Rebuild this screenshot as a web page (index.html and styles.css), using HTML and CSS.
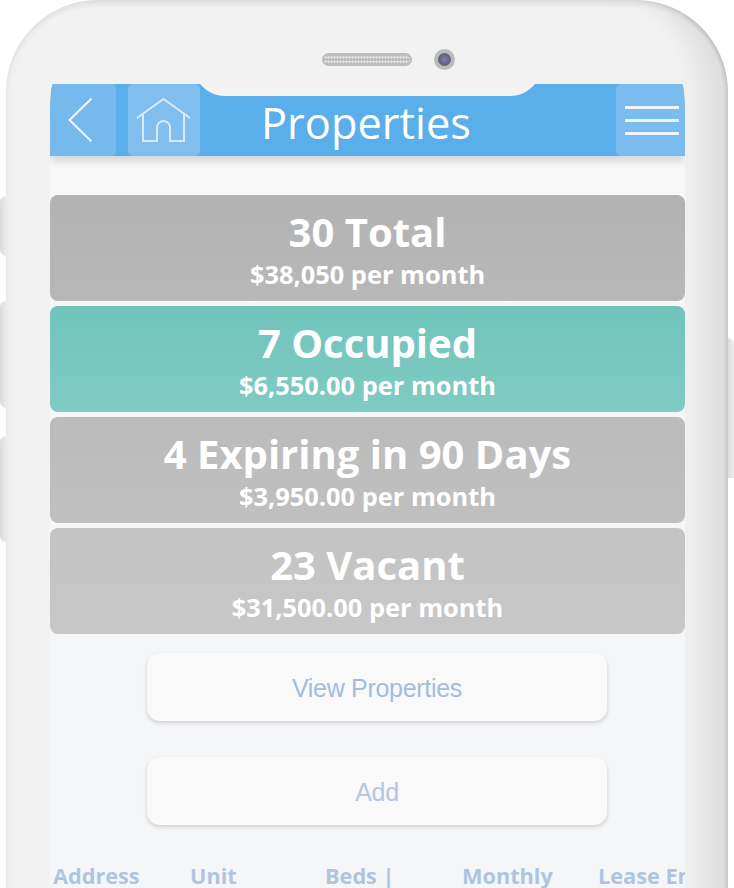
FILE: index.html
```html
<!DOCTYPE html>
<html lang="en">
<head>
    <meta charset="UTF-8">
    <meta name="viewport" content="width=device-width, initial-scale=1.0">
    <title>Properties</title>
    <link rel="stylesheet" href="styles.css">
</head>
<body>
    <div class="side_btn left_one"></div>
    <div class="side_btn left_two"></div>
    <div class="side_btn left_three"></div>
    <div class="side_btn right_one"></div>

    <div class="phone">
        <!-- speaker and camera sit on the phone body -->
        <div class="speaker"></div>
        <div class="camera"></div>

        <div class="screen">
            <div class="header">
                <div class="header_left">
                    <div class="nav_btn back_btn">
                        <svg width="26" height="46" viewBox="0 0 26 46">
                            <path d="M24.5 1.5 L2.5 23 L24.5 44.5" fill="none" stroke="#f1f7fd" stroke-width="2"/>
                        </svg>
                    </div>
                    <div class="nav_btn home_btn">
                        <svg width="56" height="46" viewBox="0 0 56 46">
                            <path d="M1 21 L27.5 2 L54 21" fill="none" stroke="#d9ebfa" stroke-width="2"/>
                            <path d="M7 16.7 V44 H21 V30.5 A6.5 6.5 0 0 1 34 30.5 V44 H48 V16.7" fill="none" stroke="#d9ebfa" stroke-width="2"/>
                        </svg>
                    </div>
                </div>
                <div class="title">Properties</div>
                <div class="header_right">
                    <div class="nav_btn menu_btn">
                        <span class="menu_line"></span>
                        <span class="menu_line"></span>
                        <span class="menu_line"></span>
                    </div>
                </div>
                <svg class="notch" width="335" height="13" viewBox="0 0 335 13">
                    <path d="M0 0 H335 C328 8 320 12 310 12 H25 C15 12 7 8 0 0 Z" fill="#f3f3f3"/>
                </svg>
            </div>

            <div class="cards">
                <div class="card card_total">
                    <div class="card_title">30 Total</div>
                    <div class="card_sub">$38,050 per month</div>
                </div>
                <div class="card card_occupied">
                    <div class="card_title">7 Occupied</div>
                    <div class="card_sub">$6,550.00 per month</div>
                </div>
                <div class="card card_expiring">
                    <div class="card_title">4 Expiring in 90 Days</div>
                    <div class="card_sub">$3,950.00 per month</div>
                </div>
                <div class="card card_vacant">
                    <div class="card_title">23 Vacant</div>
                    <div class="card_sub">$31,500.00 per month</div>
                </div>
            </div>

            <div class="actions">
                <div class="action_btn">View Properties</div>
                <div class="action_btn add_btn">Add</div>
            </div>

            <div class="table_head">
                <div class="col_address">Address</div>
                <div class="col_unit">Unit</div>
                <div class="col_beds">Beds |</div>
                <div class="col_rent">Monthly</div>
                <div class="col_lease">Lease End</div>
            </div>
        </div>
    </div>
</body>
</html>
```

FILE: styles.css
```css
html, body{
    margin: 0;
    height: 888px;
    overflow: hidden;
    background-color: #fff;
}
body{
    position: relative;
    font-family: "Open Sans", "Noto Sans", sans-serif;
}
.phone{
    position: relative;
    box-sizing: border-box;
    width: 722px;
    height: 1000px;
    margin-left: 6px;
    padding: 84px 43px 0 44px;
    border-radius: 92px;
    background-color: #f2f2f2;
    box-shadow:
        inset -3px 0 3px rgba(0, 0, 0, 0.08),
        inset -44px 0 30px -20px rgba(0, 0, 0, 0.09),
        inset 10px 0 8px -8px rgba(0, 0, 0, 0.04),
        inset 0 6px 4px -1px rgba(0, 0, 0, 0.06);
}
.side_btn{
    position: absolute;
    width: 8px;
    background: linear-gradient(90deg, #dcdcdc, #efefef);
}
.left_one{
    left: 0;
    top: 196px;
    height: 60px;
    border-radius: 6px 0 0 6px;
}
.left_two{
    left: 0;
    top: 301px;
    height: 107px;
    border-radius: 6px 0 0 6px;
}
.left_three{
    left: 0;
    top: 436px;
    height: 106px;
    border-radius: 6px 0 0 6px;
}
.right_one{
    right: 0;
    top: 338px;
    height: 140px;
    width: 6px;
    border-radius: 0 6px 0 0;
    background: linear-gradient(90deg, #dcdcdc, #ececec);
}
.speaker{
    position: absolute;
    left: 316px;
    top: 53px;
    width: 90px;
    height: 13px;
    box-sizing: border-box;
    border: 2px solid #bdbdbd;
    border-radius: 7px;
    background-color: #bdbdbd;
    background-image: radial-gradient(circle, #e6e6e6 0, #e6e6e6 1px, transparent 1.3px);
    background-size: 3px 4.5px;
}
.camera{
    position: absolute;
    left: 428px;
    top: 49px;
    width: 21px;
    height: 21px;
    box-sizing: border-box;
    border: 4px solid #bcbcbc;
    border-radius: 50%;
    background: radial-gradient(circle, #7d7fb0 0, #66667f 50%, #55555f 100%);
}
.screen{
    height: 100%;
    overflow: hidden;
    background: linear-gradient(180deg, #f8f8f9 80px, #f5f6f8 300px);
}
.header{
    position: relative;
    display: grid;
    grid-template-columns: 1fr auto 1fr;
    height: 72px;
    border-radius: 3px 3px 0 0 / 40px 40px 0 0;
    background-color: #5aaeea;
    box-shadow: 0 4px 10px rgba(0, 0, 0, 0.16);
}
.header_left{
    display: flex;
    gap: 12px;
}
.header_right{
    display: flex;
    justify-content: flex-end;
}
.nav_btn{
    display: flex;
    align-items: center;
    justify-content: center;
    height: 72px;
    background-color: #7bbcee;
    border-radius: 5px;
}
.back_btn{
    box-sizing: border-box;
    width: 66px;
    padding-right: 6px;
    background-color: #75b9ed;
    border-radius: 3px 4px 4px 0 / 40px 4px 4px 0;
}
.home_btn{
    width: 72px;
    background-color: #7fbeef;
}
.menu_btn{
    box-sizing: border-box;
    flex-direction: column;
    gap: 10px;
    width: 69px;
    padding-left: 3px;
    border-radius: 5px 3px 0 5px / 5px 40px 0 5px;
}
.menu_line{
    width: 54px;
    height: 3px;
    background-color: #eef6fd;
}
.title{
    color: #fff;
    font-size: 43.4px;
    line-height: 78px;
    margin-left: -3px;
}
.notch{
    position: absolute;
    left: 150px;
    top: 0;
}
.cards{
    display: flex;
    flex-direction: column;
    gap: 5px;
    margin-top: 39px;
}
.card{
    height: 106px;
    padding-top: 10px;
    box-sizing: border-box;
    border-radius: 8px;
    color: #fff;
    font-weight: 700;
    text-align: center;
}
.card_title{
    font-size: 40px;
    line-height: 53px;
}
.card_sub{
    font-size: 25.4px;
    line-height: 33px;
}
.card_total{
    background: linear-gradient(180deg, #b2b2b2, #b8b8b8);
}
.card_occupied{
    background: linear-gradient(180deg, #70c4bc, #80cbc3);
}
.card_expiring{
    background: linear-gradient(180deg, #bbbbbb, #c0c0c0);
}
.card_vacant{
    background: linear-gradient(180deg, #c3c3c3, #c8c8c8);
}
.actions{
    display: flex;
    flex-direction: column;
    align-items: center;
    gap: 36px;
    margin-top: 19px;
    padding-left: 19px;
}
.action_btn{
    width: 460px;
    height: 68px;
    border-radius: 13px;
    background-color: #f9f9fa;
    box-shadow: 0 2px 4px rgba(0, 0, 0, 0.16);
    color: #a3bcdf;
    font-family: "Liberation Sans", Arial, sans-serif;
    font-size: 25px;
    line-height: 70px;
    text-align: center;
    letter-spacing: -0.3px;
}
.add_btn{
    color: #b3c7e4;
}
.table_head{
    display: flex;
    margin-top: 36px;
    padding-left: 3px;
    color: #aec5e0;
    font-size: 21.7px;
    font-weight: 700;
    line-height: 30px;
    white-space: nowrap;
}
.table_head div{
    flex: none;
}
.col_address{
    width: 137px;
}
.col_unit{
    width: 135px;
}
.col_beds{
    width: 137px;
}
.col_rent{
    width: 136px;
}
```
